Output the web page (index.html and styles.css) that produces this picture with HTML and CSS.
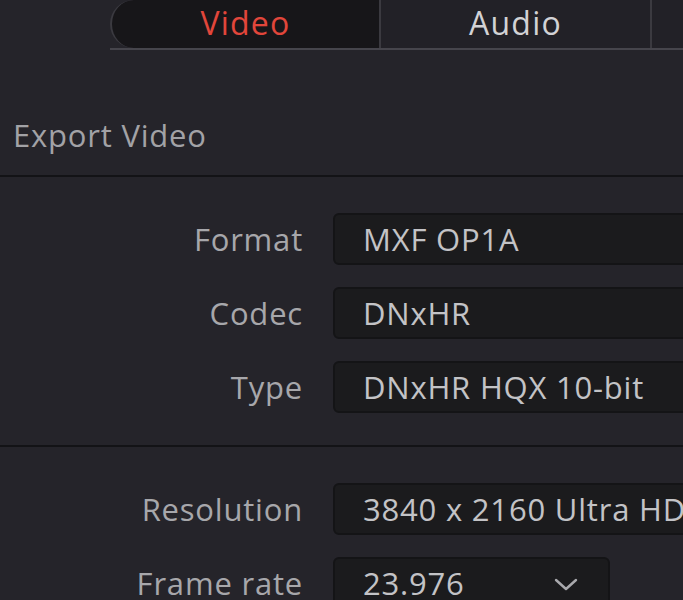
FILE: index.html
```html
<!DOCTYPE html>
<html>
<head>
<meta charset="utf-8">
<link rel="stylesheet" href="styles.css">
</head>
<body>
<div class="page">
  <div class="tabs">
    <div class="tab tab-active">Video</div>
    <div class="tab">Audio</div>
    <div class="tab tab-more"></div>
  </div>
  <div class="section-head">Export Video</div>
  <div class="group">
    <div class="row"><div class="label">Format</div><div class="field">MXF OP1A</div></div>
    <div class="row"><div class="label">Codec</div><div class="field">DNxHR</div></div>
    <div class="row"><div class="label">Type</div><div class="field">DNxHR HQX 10-bit</div></div>
  </div>
  <div class="group group-second">
    <div class="row"><div class="label">Resolution</div><div class="field">3840 x 2160 Ultra HD</div></div>
    <div class="row"><div class="label">Frame rate</div><div class="field field-select"><span>23.976</span>
      <svg class="chev" width="24" height="14" viewBox="0 0 24 14"><path d="M2 2 L12 11 L22 2" fill="none" stroke="#a9a9ad" stroke-width="2.4" stroke-linecap="round" stroke-linejoin="round"/></svg>
    </div></div>
  </div>
</div>
</body>
</html>
```
FILE: styles.css
```css
html, body {
  margin: 0;
  padding: 0;
  background: #25242a;
  overflow: hidden;
}
.page {
  width: 683px;
  height: 600px;
  overflow: hidden;
  font-family: "Open Sans", "Noto Sans", sans-serif;
  background: #25242a;
}
.tabs {
  display: flex;
  margin-left: 110px;
  height: 48px;
  width: 700px;
  border-bottom: 2px solid #46454c;
}
.tab {
  flex: none;
  width: 271px;
  display: flex;
  align-items: center;
  justify-content: center;
  font-size: 32px;
  font-weight: 500;
  letter-spacing: 1.2px;
  color: #d2d2d5;
  background: #222127;
  border-left: 2px solid #3b3a40;
  padding-bottom: 4px;
  box-sizing: border-box;
}
.tab-active {
  width: 269px;
  color: #e2463b;
  background: #171619;
  border-left: 2px solid #3b3a40;
  border-radius: 26px 0 0 26px;
}
.tab-more {
  width: 200px;
}
.section-head {
  height: 127px;
  display: flex;
  align-items: flex-start;
  padding-left: 13px;
  padding-top: 64px;
  box-sizing: border-box;
  font-size: 31px;
  letter-spacing: 0.8px;
  line-height: 42px;
  color: #a2a2a6;
  border-bottom: 2px solid #131316;
}
.group {
  display: flex;
  flex-direction: column;
  gap: 22px;
  padding-top: 36px;
  padding-bottom: 32px;
  border-bottom: 2px solid #131316;
}
.group-second {
  border-bottom: none;
}
.row {
  display: flex;
  align-items: center;
  gap: 30px;
}
.label {
  width: 303px;
  flex: none;
  text-align: right;
  font-size: 31px;
  letter-spacing: 0.8px;
  color: #a7a7ab;
}
.field {
  flex: none;
  width: 400px;
  height: 52px;
  box-sizing: border-box;
  background: #1b1b1d;
  border: 2px solid #141416;
  border-radius: 6px;
  display: flex;
  align-items: center;
  padding-left: 28px;
  font-size: 31px;
  letter-spacing: 0.8px;
  color: #c3c3c6;
}
.field-select {
  width: 277px;
  justify-content: space-between;
  padding-right: 30px;
}
.chev {
  margin-top: 4px;
}
```
